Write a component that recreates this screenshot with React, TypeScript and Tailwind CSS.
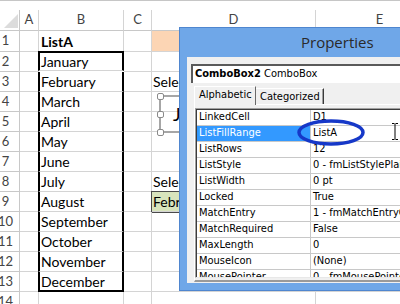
import React from "react";

const months = [
  "January",
  "February",
  "March",
  "April",
  "May",
  "June",
  "July",
  "August",
  "September",
  "October",
  "November",
  "December",
];

const props: [string, string][] = [
  ["LinkedCell", "D1"],
  ["ListFillRange", "ListA"],
  ["ListRows", "12"],
  ["ListStyle", "0 - fmListStylePlain"],
  ["ListWidth", "0 pt"],
  ["Locked", "True"],
  ["MatchEntry", "1 - fmMatchEntryComplete"],
  ["MatchRequired", "False"],
  ["MaxLength", "0"],
  ["MouseIcon", "(None)"],
  ["MousePointer", "0 - fmMousePointerDefault"],
];

const gridLine = "border-r border-b border-[#d4d4d4]";

function SheetCell({ r, c }: { r: number; c: number }) {
  const h = r === 1 ? "h-[21px]" : "h-[20px]";
  if (c === 0) {
    return (
      <div
        className={`${h} border-r border-b border-[#c8c8c8] flex items-center justify-center text-[13px] text-[#444]`}
      >
        {r}
      </div>
    );
  }
  if (c === 2) {
    if (r === 1) {
      return (
        <div className={`${h} ${gridLine} flex items-center pl-[2px] font-bold`}>
          ListA
        </div>
      );
    }
    if (r >= 2 && r <= 13) {
      const cls = [
        h,
        "-ml-px border-l-2 border-r-2 border-l-black border-r-black flex items-center pl-px whitespace-nowrap",
        r === 2 ? "-mt-px border-t-2 border-t-black" : "",
        r === 13 ? "-mb-px border-b-2 border-b-black" : "border-b border-b-[#d4d4d4]",
      ].join(" ");
      return <div className={cls}>{months[r - 2]}</div>;
    }
  }
  if (c === 4) {
    if (r === 1) {
      return <div className={`${h} ${gridLine} bg-[#fcd5b4]`} />;
    }
    if (r === 3 || r === 8) {
      return (
        <div className={`${h} ${gridLine} flex items-center pl-px whitespace-nowrap`}>
          Select Month:
        </div>
      );
    }
    if (r === 9) {
      return (
        <div
          className={`${h} ${gridLine} bg-[#d8e4bc] outline outline-1 outline-[#4a4a4a] flex items-center pl-px whitespace-nowrap`}
        >
          February
        </div>
      );
    }
  }
  return <div className={`${h} ${gridLine}`} />;
}

export default function App() {
  const rows = Array.from({ length: 14 }, (_, i) => i + 1);
  return (
    <div className="relative w-[400px] h-[304px] overflow-hidden bg-white font-['Lato',sans-serif] text-[14px] text-black">
      {/* formula bar edge */}
      <div className="h-[10px] border-t border-[#c6c6c6]" />

      {/* sheet */}
      <div className="-ml-[8px] grid grid-cols-[28px_19px_85px_28px_164px_128px]">
        <div className="h-[21px] border-r border-b border-[#c8c8c8] flex items-end justify-end pr-[1px] pb-[2px]">
          <svg width="14" height="14" viewBox="0 0 14 14">
            <polygon points="14,0 14,14 0,14" fill="#dcdcdc" />
          </svg>
        </div>
        {["A", "B", "C", "D", "E"].map((l) => (
          <div
            key={l}
            className="h-[21px] border-r border-b border-[#d4d4d4] border-b-[#c8c8c8] flex items-center justify-center text-[13px] text-[#444]"
          >
            {l}
          </div>
        ))}
        {rows.map((r) =>
          [0, 1, 2, 3, 4, 5].map((c) => <SheetCell key={`${r}-${c}`} r={r} c={c} />)
        )}
      </div>

      {/* ActiveX combobox in design mode */}
      <div className="absolute left-[159px] top-[95px] w-[60px] h-[38px] border-2 border-[#a6a6a6] flex items-center pl-[12px] text-[18px]">
        January
        <div className="absolute -left-[4px] -top-[4px] w-[7px] h-[7px] rounded-[2px] bg-white border border-[#8a8a8a]" />
        <div className="absolute -left-[4px] top-[14px] w-[7px] h-[7px] rounded-[2px] bg-white border border-[#8a8a8a]" />
        <div className="absolute -left-[4px] top-[32px] w-[7px] h-[7px] rounded-[2px] bg-white border border-[#8a8a8a]" />
      </div>

      {/* Properties window */}
      <div className="absolute left-[179px] top-[27px] w-[260px] h-[264px] border border-[#4f86cf] bg-[#6fa7e8] flex flex-col">
        <div className="h-[29px] shrink-0 pl-[121px] flex items-center font-['Open_Sans',sans-serif] text-[15px] text-[#2a2a2a]">
          Properties
        </div>
        <div className="flex-1 min-h-0 ml-[7px] mb-[7px] bg-[#f0f0f0] flex flex-col pl-[4px] pt-[7px] pb-[1px] font-['DejaVu_Sans_Condensed','DejaVu_Sans',sans-serif] text-[11px] text-black">
          {/* object box */}
          <div className="h-[19px] shrink-0 border-t-2 border-l-2 border-t-[#5a5a5a] border-l-[#5a5a5a] bg-white flex items-center pl-[2px] whitespace-nowrap">
            <span className="font-bold">ComboBox2</span>
            <span>&nbsp;ComboBox</span>
          </div>
          {/* tabs */}
          <div className="mt-[3px] ml-[3px] h-[18px] shrink-0 flex items-end">
            <div className="relative z-10 -mb-px h-[19px] w-[62px] border-t border-l border-white border-r border-r-[#696969] bg-[#f0f0f0] pl-[4px] pb-px flex items-center whitespace-nowrap">
              Alphabetic
            </div>
            <div className="h-[16px] w-[68px] border-t border-white border-r border-r-[#3a3a3a] pl-[4px] pt-px flex items-center whitespace-nowrap shadow-[inset_-1px_0_0_#a0a0a0]">
              Categorized
            </div>
          </div>
          {/* tab page */}
          <div className="ml-[3px] flex-1 min-h-0 border-t border-l border-white border-b-2 border-b-[#9a9a9a] pt-[3px] pb-[2px] flex flex-col">
            <div className="flex-1 min-h-0 border-t border-l border-[#a0a0a0] border-b border-b-[#e8e8e8] overflow-hidden">
              <div className="h-full border-t border-l border-[#3c3c3c] bg-white overflow-hidden">
                {props.map(([k, v]) => {
                  const sel = k === "ListFillRange";
                  return (
                    <div key={k} className="flex h-[16px] whitespace-nowrap">
                      <div
                        className={`w-[114px] shrink-0 border-r border-b border-[#c8c8c8] pl-[2px] flex items-center ${
                          sel ? "bg-[#3399ff] text-white" : ""
                        }`}
                      >
                        {k}
                      </div>
                      <div className="flex-1 border-b border-[#c8c8c8] pl-[2px] flex items-center">
                        {v}
                      </div>
                    </div>
                  );
                })}
              </div>
            </div>
          </div>
        </div>
      </div>

      {/* annotation ellipse */}
      <svg className="absolute left-[296px] top-[118px]" width="70" height="29" viewBox="0 0 70 29">
        <ellipse cx="35" cy="14.5" rx="32" ry="11.5" fill="none" stroke="#1638c8" strokeWidth="3.5" />
      </svg>

      {/* I-beam cursor */}
      <svg className="absolute left-[391px] top-[123px]" width="8" height="17" viewBox="0 0 8 17">
        <path d="M1 0.5 H3.5 M4.5 0.5 H7 M4 1 V16 M1 16.5 H3.5 M4.5 16.5 H7" stroke="#000" strokeWidth="1" fill="none" />
      </svg>
    </div>
  );
}
